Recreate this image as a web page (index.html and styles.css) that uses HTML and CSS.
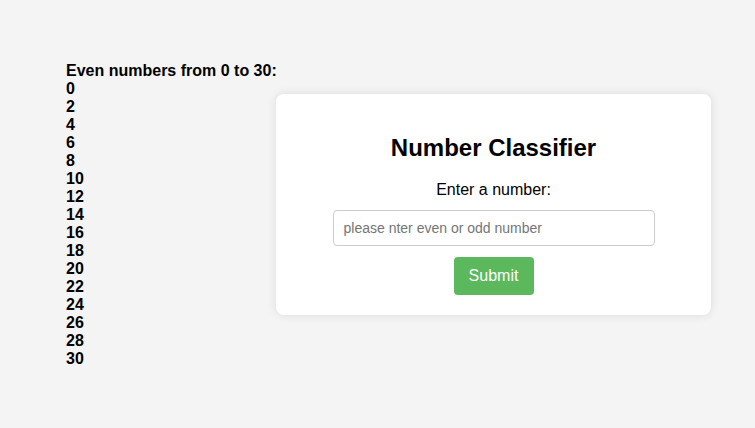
FILE: index.html
```html
<!DOCTYPE html>
<html lang="en">
<head>
<meta charset="utf-8">
<title>Number Classifier</title>
<link rel="stylesheet" href="styles.css">
</head>
<body>
<div class="page">
  <div class="evens">
    <div>Even numbers from 0 to 30:</div>
    <div>0</div><div>2</div><div>4</div><div>6</div><div>8</div>
    <div>10</div><div>12</div><div>14</div><div>16</div><div>18</div>
    <div>20</div><div>22</div><div>24</div><div>26</div><div>28</div>
    <div>30</div>
  </div>
  <div class="card">
    <h2 class="title">Number Classifier</h2>
    <label class="label" for="num">Enter a number:</label>
    <input class="input" id="num" type="text" placeholder="please nter even or odd number">
    <button class="btn" type="button">Submit</button>
  </div>
</div>
</body>
</html>
```

FILE: styles.css
```css
html, body {
  margin: 0;
  padding: 0;
  background: #f4f4f4;
  font-family: "Liberation Sans", Arial, sans-serif;
  color: #000;
}
.page {
  display: flex;
  align-items: flex-start;
  padding-left: 66px;
}
.evens {
  width: 210px;
  padding-top: 62px;
  font-weight: bold;
  font-size: 16px;
  line-height: 18px;
  white-space: nowrap;
}
.card {
  margin-top: 94px;
  width: 435px;
  box-sizing: border-box;
  background: #fff;
  border-radius: 8px;
  box-shadow: 0 0 10px rgba(0, 0, 0, 0.1);
  padding: 40px 20px 20px;
  display: flex;
  flex-direction: column;
  align-items: center;
}
.title {
  margin: 0 0 19px;
  font-size: 24px;
  font-weight: bold;
  line-height: 27.6px;
}
.label {
  font-size: 16px;
  line-height: 18px;
  margin-bottom: 11px;
}
.input {
  width: 322px;
  height: 36px;
  box-sizing: border-box;
  border: 1px solid #ccc;
  border-radius: 4px;
  padding: 0 10px;
  font-family: "Liberation Sans", Arial, sans-serif;
  font-size: 14px;
  margin: 0 0 11px;
  outline: none;
}
.input::placeholder {
  color: #757575;
}
.btn {
  width: 80px;
  height: 38px;
  box-sizing: border-box;
  border: none;
  border-radius: 4px;
  background: #5cb85c;
  color: #fff;
  font-family: "Liberation Sans", Arial, sans-serif;
  font-size: 16px;
  padding: 0;
  cursor: pointer;
}
```
